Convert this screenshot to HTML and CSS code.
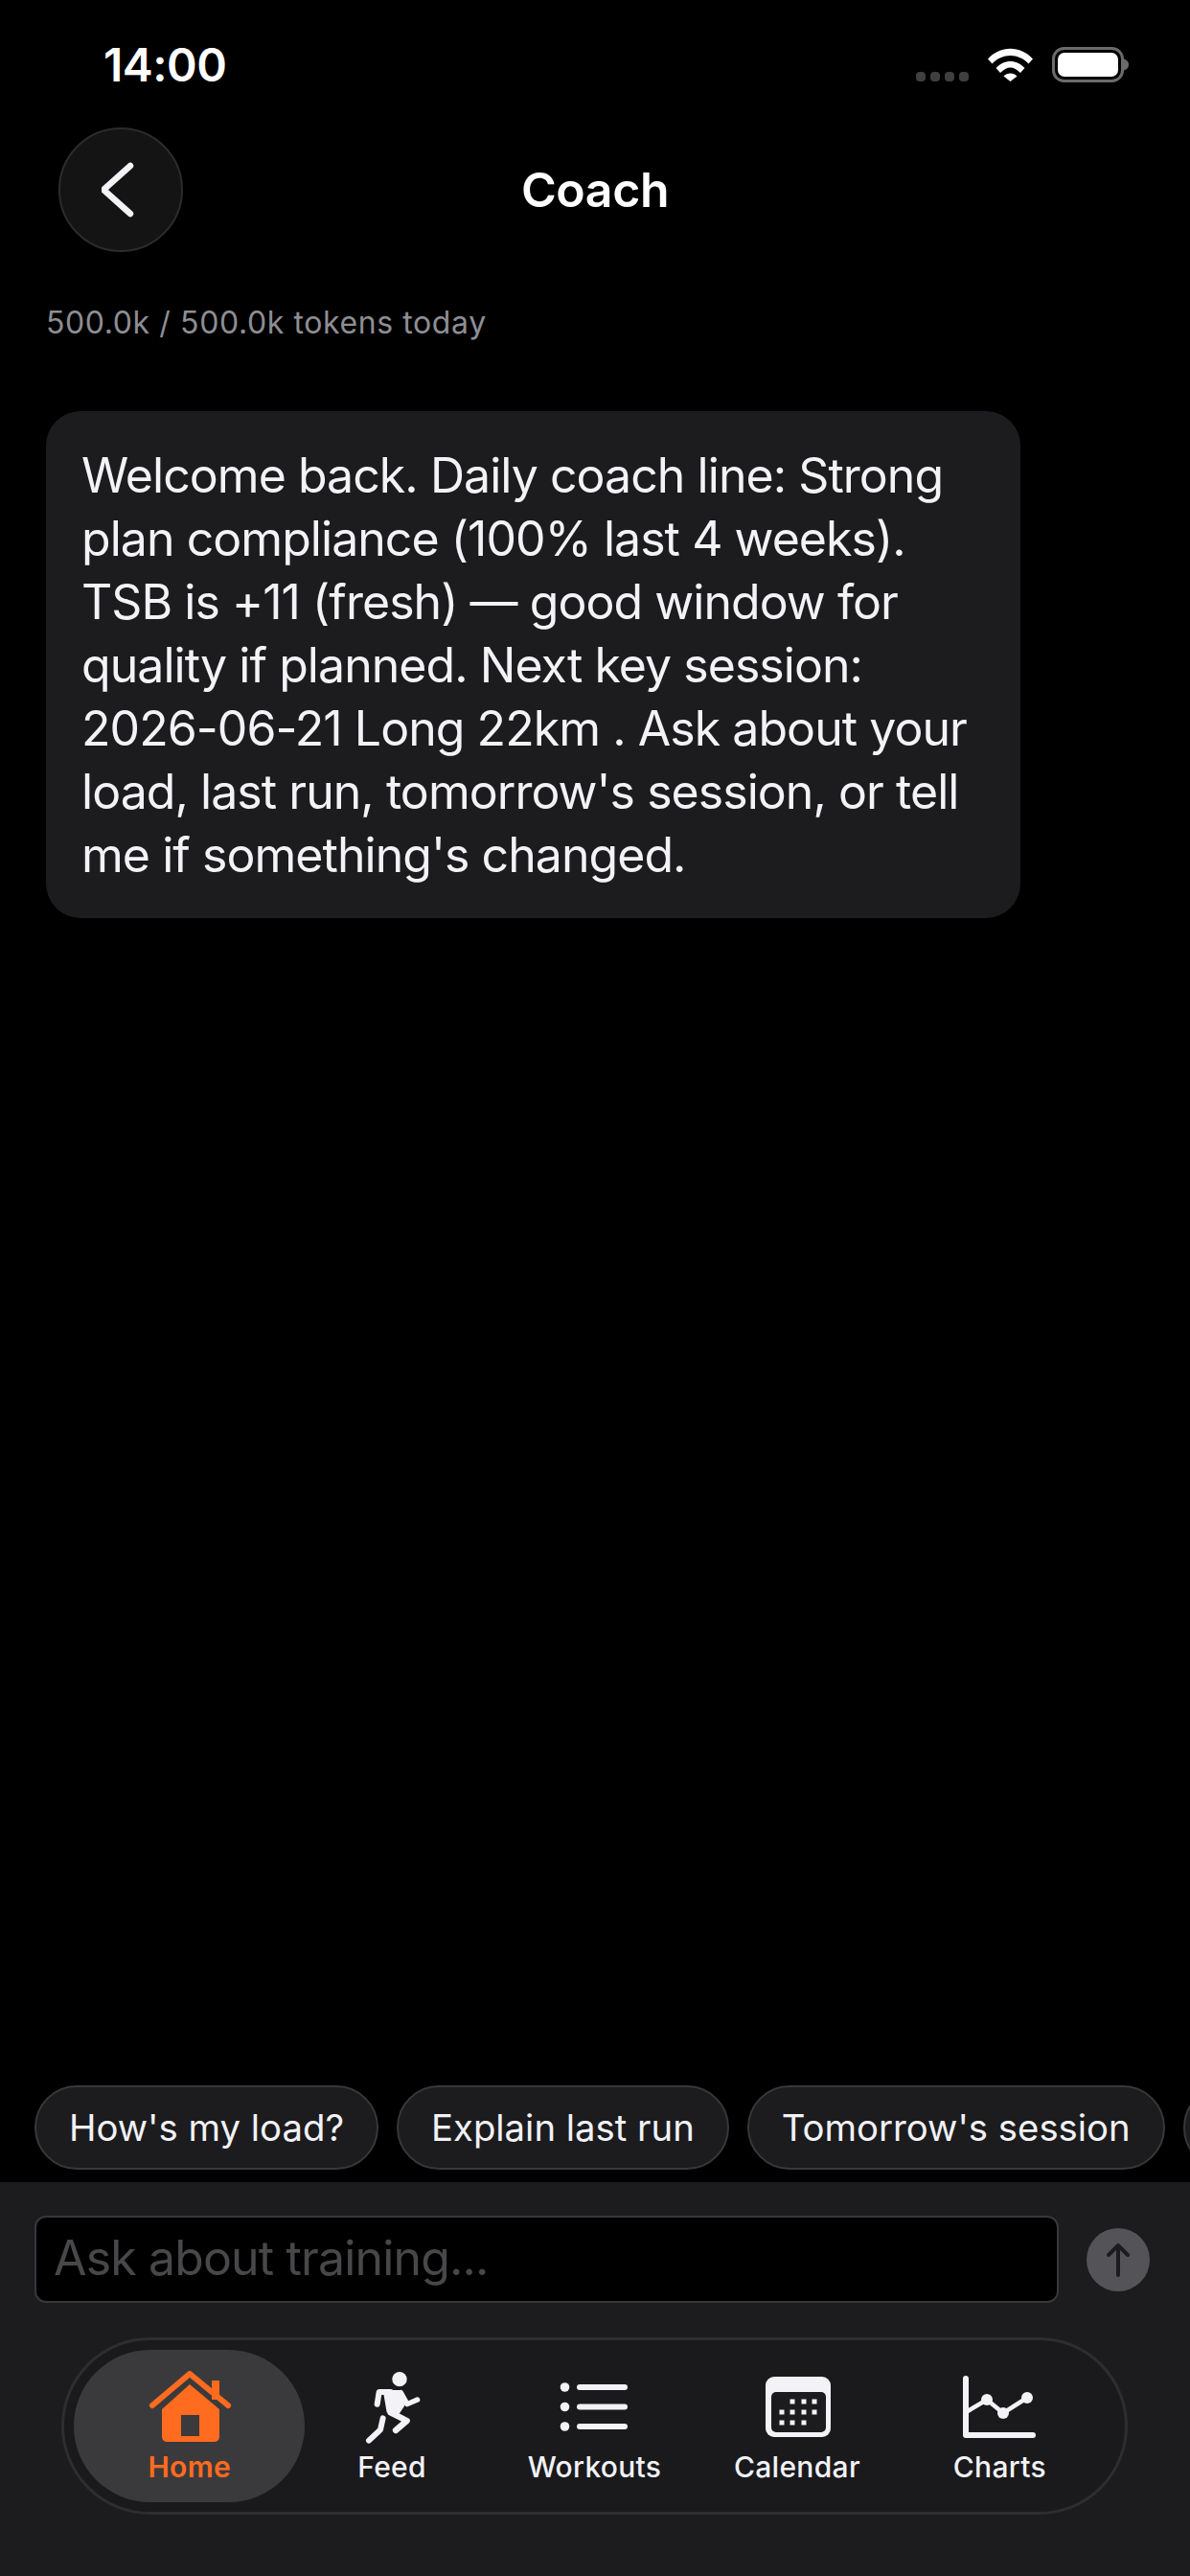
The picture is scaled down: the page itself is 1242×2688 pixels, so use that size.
FILE: index.html
```html
<!DOCTYPE html>
<html>
<head>
    <title>Coach</title>
    <link rel="stylesheet" href="styles.css">
</head>
<body>
    <div class="screen">
        <div class="status-bar">
            <span class="status-time">14:00</span>
            <div class="status-icons">
                <div class="signal"><i></i><i></i><i></i><i></i></div>
                <svg class="wifi" width="47" height="35" viewBox="0 0 47 35">
                    <path d="M0 11.5C13-3 34-3 47 11.5L42.500 16.500C32 5 15 5 4.500 16.500Z" fill="#fff"/>
                    <path d="M8.500 21C17 11.500 30 11.500 38.500 21L34 26C27 18.500 20 18.500 13 26Z" fill="#fff"/>
                    <path d="M16.500 29.500C20 25.500 27 25.500 30.500 29.500L23.500 35Z" fill="#fff"/>
                </svg>
                <svg class="battery" width="80" height="37" viewBox="0 0 80 37">
                    <rect x="1.500" y="1.500" width="72" height="34" rx="11" fill="none" stroke="#6b6b6b" stroke-width="3"/>
                    <rect x="6" y="6" width="63" height="25" rx="7" fill="#fff"/>
                    <path d="M75 12.500C79 14 80 16 80 18.500C80 21 79 23 75 24.500Z" fill="#6b6b6b"/>
                </svg>
            </div>
        </div>

        <div class="header">
            <div class="back-btn">
                <svg width="40" height="60" viewBox="0 0 40 60">
                    <path d="M30 5L2 30L30 55" fill="none" stroke="#f2f2f7" stroke-width="6.500" stroke-linecap="round" stroke-linejoin="round"/>
                </svg>
            </div>
            <h1 class="title">Coach</h1>
            <div class="header-spacer"></div>
        </div>

        <div class="tokens">500.0k / 500.0k tokens today</div>

        <div class="messages">
            <div class="bubble">
                Welcome back. Daily coach line: Strong<br>
                plan compliance (100% last 4 weeks).<br>
                TSB is +11 (fresh) — good window for<br>
                quality if planned. Next key session:<br>
                2026-06-21 Long 22km . Ask about your<br>
                load, last run, tomorrow's session, or tell<br>
                me if something's changed.
            </div>
        </div>

        <div class="chips">
            <div class="chip">How's my load?</div>
            <div class="chip">Explain last run</div>
            <div class="chip">Tomorrow's session</div>
            <div class="chip chip-cut"></div>
        </div>

        <div class="bottom-panel">
            <div class="composer">
                <div class="composer-input">Ask about training...</div>
                <div class="send-btn">
                    <svg width="30" height="38" viewBox="0 0 30 38">
                        <path d="M15 35V4M5 14L15 4L25 14" fill="none" stroke="#1c1c1e" stroke-width="4" stroke-linecap="round" stroke-linejoin="round"/>
                    </svg>
                </div>
            </div>

            <div class="tabbar">
                <div class="tab tab-active">
                    <svg width="100" height="76" viewBox="0 0 100 76">
                        <path d="M73 10H81V30H73Z" fill="#ff6b1f"/>
                        <path d="M11 36L50 3L90 36" fill="none" stroke="#ff6b1f" stroke-width="6" stroke-linecap="round" stroke-linejoin="round"/>
                        <path d="M21 40L50 14L81 40V68Q81 74 75 74H27Q21 74 21 68Z" fill="#ff6b1f"/>
                        <rect x="41" y="46" width="19" height="22" fill="#3a3a3c"/>
                    </svg>
                    <span>Home</span>
                </div>
                <div class="tab">
                    <svg width="100" height="76" viewBox="0 0 300 228">
                        <circle cx="174" cy="26" r="23" fill="#f2f2f7"/>
                        <path d="M122 60H176L196 100L168 142L134 130Z" fill="#f2f2f7"/>
                        <path d="M146 66H110L104 104" fill="none" stroke="#f2f2f7" stroke-width="18" stroke-linecap="round" stroke-linejoin="round"/>
                        <path d="M178 68L198 104L230 90" fill="none" stroke="#f2f2f7" stroke-width="16" stroke-linecap="round" stroke-linejoin="round"/>
                        <path d="M146 130L197 156L162 186" fill="none" stroke="#f2f2f7" stroke-width="19" stroke-linecap="round" stroke-linejoin="round"/>
                        <path d="M122 148L114 184L78 218" fill="none" stroke="#f2f2f7" stroke-width="18" stroke-linecap="round" stroke-linejoin="round"/>
                    </svg>
                    <span>Feed</span>
                </div>
                <div class="tab">
                    <svg width="100" height="76" viewBox="0 0 100 76">
                        <circle cx="19.500" cy="17" r="4.800" fill="#f2f2f7"/>
                        <circle cx="19.500" cy="37.500" r="4.800" fill="#f2f2f7"/>
                        <circle cx="19.500" cy="58" r="4.800" fill="#f2f2f7"/>
                        <path d="M35 17H82M35 37.500H82M35 58H82" stroke="#f2f2f7" stroke-width="6" stroke-linecap="round"/>
                    </svg>
                    <span>Workouts</span>
                </div>
                <div class="tab">
                    <svg width="100" height="76" viewBox="0 0 100 76">
                        <rect x="17" y="6" width="68" height="63" rx="9" fill="#f2f2f7"/>
                        <rect x="23" y="22" width="57" height="42" rx="5" fill="#1c1c1e"/>
                        <g fill="#f2f2f7">
                            <rect x="42.500" y="29.500" width="5" height="5"/>
                            <rect x="54.500" y="29.500" width="5" height="5"/>
                            <rect x="65.500" y="29.500" width="5" height="5"/>
                            <rect x="31.500" y="40.500" width="5" height="5"/>
                            <rect x="42.500" y="40.500" width="5" height="5"/>
                            <rect x="54.500" y="40.500" width="5" height="5"/>
                            <rect x="65.500" y="40.500" width="5" height="5"/>
                            <rect x="31.500" y="51.500" width="5" height="5"/>
                            <rect x="42.500" y="51.500" width="5" height="5"/>
                            <rect x="54.500" y="51.500" width="5" height="5"/>
                        </g>
                    </svg>
                    <span>Calendar</span>
                </div>
                <div class="tab">
                    <svg width="100" height="76" viewBox="0 0 100 76">
                        <path d="M15 8V67H85" fill="none" stroke="#f2f2f7" stroke-width="6" stroke-linecap="round" stroke-linejoin="round"/>
                        <path d="M17 42L37 30L54 44L79 28" fill="none" stroke="#f2f2f7" stroke-width="4.500"/>
                        <circle cx="37" cy="30" r="6" fill="#f2f2f7"/>
                        <circle cx="54" cy="44" r="6" fill="#f2f2f7"/>
                        <circle cx="79" cy="28" r="6" fill="#f2f2f7"/>
                    </svg>
                    <span>Charts</span>
                </div>
            </div>
        </div>
    </div>
</body>
</html>
```

FILE: styles.css
```css
* {
    box-sizing: border-box;
}

body {
    font-family: Inter, "Liberation Sans", sans-serif;
    margin: 0;
    padding: 0;
    background-color: #000000;
    color: #f2f2f7;
}

.screen {
    display: flex;
    flex-direction: column;
    width: 1242px;
    height: 2688px;
    overflow: hidden;
}

/* Status bar */
.status-bar {
    display: flex;
    justify-content: space-between;
    align-items: flex-start;
    height: 132px;
    padding: 49px 64px 0 108px;
}

.status-time {
    font-size: 48px;
    font-weight: 600;
    letter-spacing: -0.5px;
    line-height: 38px;
    color: #ffffff;
}

.status-icons {
    display: flex;
    align-items: flex-start;
    gap: 20px;
}

.signal {
    display: flex;
    gap: 5px;
    margin-top: 26px;
}

.signal i {
    width: 10px;
    height: 10px;
    border-radius: 4px;
    background-color: #3f3f3f;
}

.wifi {
    margin-top: 1px;
}

/* Header */
.header {
    display: flex;
    align-items: center;
    height: 131px;
    padding: 0 61px;
}

.back-btn, .header-spacer {
    width: 130px;
    height: 130px;
    flex-shrink: 0;
}

.back-btn {
    display: flex;
    justify-content: center;
    align-items: center;
    background-color: #141414;
    border: 2px solid #2c2c2e;
    border-radius: 50%;
}

.title {
    flex: 1;
    margin: 0;
    font-size: 50px;
    font-weight: 600;
    letter-spacing: -0.4px;
    text-align: center;
    color: #ffffff;
}

.tokens {
    margin: 54px 48px 0;
    font-size: 32px;
    letter-spacing: 0.6px;
    line-height: 40px;
    color: #8e8e93;
}

/* Messages */
.messages {
    flex: 1;
    padding: 72px 48px 0;
}

.bubble {
    width: 1017px;
    padding: 34px 37px 33px;
    background-color: #1c1c1e;
    border-radius: 36px;
    font-size: 50px;
    letter-spacing: -0.95px;
    line-height: 66px;
}

/* Quick prompts */
.chips {
    display: flex;
    gap: 19px;
    padding: 0 36px 13px;
}

.chip {
    display: flex;
    align-items: center;
    flex-shrink: 0;
    height: 88px;
    padding: 0 34px;
    background-color: #1c1c1e;
    border: 2px solid #38383a;
    border-radius: 44px;
    font-size: 38.300px;
}

.chip-cut {
    width: 200px;
}

/* Bottom panel */
.bottom-panel {
    height: 411px;
    padding-top: 35px;
    background-color: #1c1c1e;
}

.composer {
    display: flex;
    align-items: center;
    padding: 0 42px 0 36px;
}

.composer-input {
    flex: 1;
    height: 91px;
    padding: 0 18px;
    background-color: #000000;
    border: 2px solid #38383a;
    border-radius: 12px;
    font-size: 50px;
    letter-spacing: -0.85px;
    line-height: 85px;
    color: #48484a;
}

.send-btn {
    display: flex;
    justify-content: center;
    align-items: center;
    width: 66px;
    height: 66px;
    margin-left: 29px;
    border-radius: 50%;
    background-color: #545458;
}

.tabbar {
    display: grid;
    grid-template-columns: repeat(5, 1fr);
    width: 1113px;
    height: 185px;
    margin: 36px 0 0 64px;
    padding: 10px 25px;
    border: 3px solid #2e2e30;
    border-radius: 93px;
    background-color: #1a1a1c;
}

.tab {
    display: flex;
    flex-direction: column;
    align-items: center;
    padding-top: 22px;
    font-size: 30px;
    font-weight: 500;
    letter-spacing: 0.3px;
    line-height: 36px;
    color: #f2f2f7;
}

.tab svg {
    flex-shrink: 0;
    margin-bottom: 6px;
}

.tab-active {
    margin: 0 -15px;
    background-color: #3a3a3c;
    border-radius: 81px;
    color: #ff6b1f;
    font-weight: 600;
}
```
